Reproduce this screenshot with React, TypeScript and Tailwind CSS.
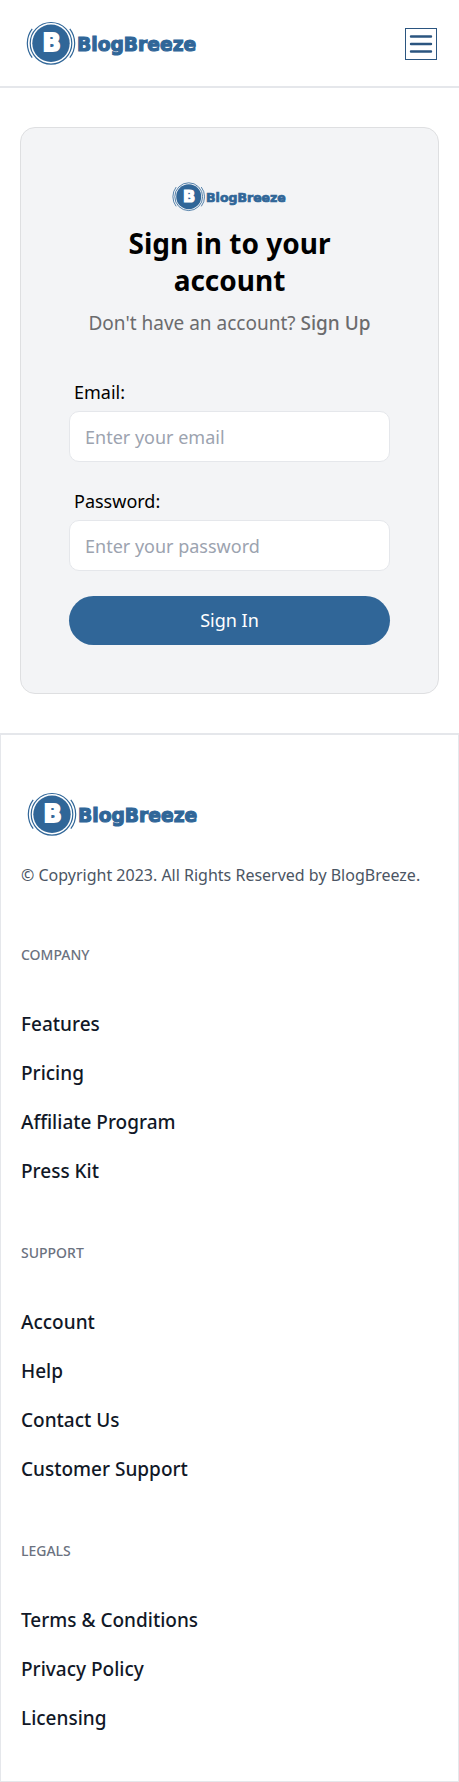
type LogoProps = { className: string };

function Logo({ className }: LogoProps) {
  return (
    <svg viewBox="0 0 172 46" className={className} role="img" aria-label="BlogBreeze">
      <g fill="none" stroke="#306698" strokeWidth="1.2">
        <circle cx="25" cy="23.3" r="20.8" />
        <path d="M6.2 8.9 A23.7 23.7 0 0 0 6.2 37.7M43.8 8.9 A23.7 23.7 0 0 1 43.8 37.7" />
      </g>
      <circle cx="25" cy="23.3" r="18.7" fill="#306698" />
      <text x="25.7" y="31.4" textAnchor="middle" fontSize="24" fontWeight="700" fill="#fff" stroke="#fff" strokeWidth="1.8" className="font-['DejaVu_Sans',sans-serif]">
        B
      </text>
      <text x="51" y="30.7" fontSize="18.7" fontWeight="700" fill="#306698" stroke="#306698" strokeWidth="1.1" className="font-['DejaVu_Sans',sans-serif]">
        BlogBreeze
      </text>
    </svg>
  );
}

const sections = [
  { title: "Company", links: ["Features", "Pricing", "Affiliate Program", "Press Kit"] },
  { title: "Support", links: ["Account", "Help", "Contact Us", "Customer Support"] },
  { title: "Legals", links: ["Terms & Conditions", "Privacy Policy", "Licensing"] },
];

type FieldProps = { id: string; label: string; type: string; placeholder: string };

function Field({ id, label, type, placeholder }: FieldProps) {
  return (
    <div>
      <label htmlFor={id} className="mb-1 block pl-[5px] text-[18px] leading-[29px] text-black">
        {label}
      </label>
      <input
        id={id}
        type={type}
        placeholder={placeholder}
        className="block h-[51px] w-full rounded-[10px] border border-gray-200 bg-white px-[15px] text-[18px] text-black outline-none placeholder:text-[#9ca3af]"
      />
    </div>
  );
}

export default function App() {
  return (
    <div className="bg-white font-['Noto_Sans','Open_Sans',sans-serif]">
      <header className="flex items-center justify-between border-b-2 border-[#e5e7eb] py-5 pr-[22px] pl-[26px]">
        <a href="#home">
          <Logo className="h-[46px] w-[172px]" />
        </a>
        <button type="button" aria-label="Open menu" className="mt-px flex h-8 w-8 items-center justify-center border border-[#2b5580]">
          <svg viewBox="0 0 24 24" className="h-6 w-6" stroke="#2b5580" strokeWidth="2.4" strokeLinecap="round">
            <path d="M2 4.5h20M2 12h20M2 19.5h20" />
          </svg>
        </button>
      </header>

      <main className="px-5 py-[39px]">
        <section className="rounded-[15px] border border-[#dedfe1] bg-[#f3f4f6] p-12">
          <div className="flex justify-center pt-[5px]">
            <Logo className="h-[31px] w-[115px]" />
          </div>
          <h2 className="mt-[13px] px-10 text-center text-[28px] leading-[37px] font-bold text-black">Sign in to your account</h2>
          <p className="mt-2.5 text-center text-[19px] leading-[29px] text-[#6b6b6d]">
            Don't have an account?{" "}
            <a href="#signup" className="font-medium">
              Sign Up
            </a>
          </p>
          <form className="mt-10 flex flex-col gap-[25px]">
            <Field id="email" label="Email:" type="email" placeholder="Enter your email" />
            <Field id="password" label="Password:" type="password" placeholder="Enter your password" />
            <button type="button" className="h-[49px] w-full rounded-full bg-[#306698] text-[18px] text-white">
              Sign In
            </button>
          </form>
        </section>
      </main>

      <footer className="border border-t-2 border-[#e5e7eb] px-5 pt-14 pb-12">
        <Logo className="ml-1.5 h-[46px] w-[172px]" />
        <p className="mt-[26px] text-base leading-6 text-[#4b5563]">© Copyright 2023. All Rights Reserved by BlogBreeze.</p>
        <div className="mt-[58px] flex flex-col gap-[57px]">
          {sections.map((section) => (
            <nav key={section.title} aria-label={section.title}>
              <h3 className="text-sm leading-5 font-medium text-[#6b7280] uppercase">{section.title}</h3>
              <ul className="mt-[45px] flex flex-col gap-5">
                {section.links.map((link) => (
                  <li key={link} className="text-[19px] leading-[29px] font-medium text-[#111827]">
                    <a href="#footer">{link}</a>
                  </li>
                ))}
              </ul>
            </nav>
          ))}
        </div>
      </footer>
    </div>
  );
}
